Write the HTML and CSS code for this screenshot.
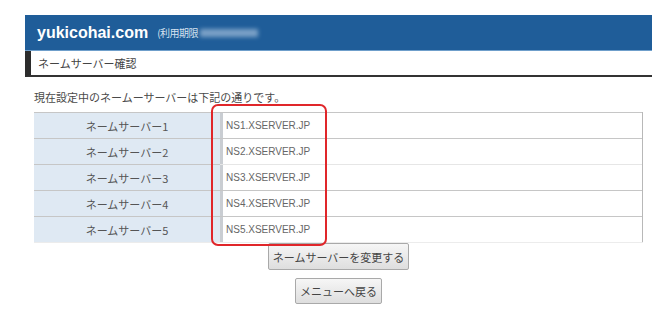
FILE: index.html
```html
<!DOCTYPE html>
<html lang="ja">
<head>
<meta charset="utf-8">
<link rel="stylesheet" href="styles.css">
</head>
<body>
<div class="page">
  <div class="header">
    <span class="site">yukicohai.com</span>
    <span class="limit">(利用期限</span>
    <span class="blur"></span>
  </div>
  <div class="title">ネームサーバー確認</div>
  <p class="lead">現在設定中のネームーサーバーは下記の通りです。</p>
  <div class="table-wrap">
    <table class="ns">
      <tr><th>ネームサーバー1</th><td>NS1.XSERVER.JP</td></tr>
      <tr><th>ネームサーバー2</th><td>NS2.XSERVER.JP</td></tr>
      <tr class="soft"><th>ネームサーバー3</th><td>NS3.XSERVER.JP</td></tr>
      <tr><th>ネームサーバー4</th><td>NS4.XSERVER.JP</td></tr>
      <tr class="last"><th>ネームサーバー5</th><td>NS5.XSERVER.JP</td></tr>
    </table>
    <div class="highlight"></div>
  </div>
  <div class="buttons">
    <button class="btn btn-wide">ネームサーバーを変更する</button>
    <button class="btn btn-small">メニューへ戻る</button>
  </div>
</div>
</body>
</html>
```

FILE: styles.css
```css
html, body {
  margin: 0;
  padding: 0;
  background: #fff;
}
body {
  font-family: "Noto Sans CJK JP", "Liberation Sans", sans-serif;
  color: #444;
}
.page {
  margin-left: 25px;
  width: 627px;
  padding-top: 15px;
}
.header {
  height: 35px;
  background: #1f5d99;
  border-bottom: 1px solid #6f9fcb;
  display: flex;
  align-items: center;
  padding-left: 12px;
  box-sizing: content-box;
}
.site {
  font-family: "Liberation Sans", Arial, sans-serif;
  font-weight: bold;
  font-size: 16px;
  color: #fff;
  letter-spacing: 0;
}
.limit {
  margin-left: 9px;
  font-size: 10px;
  color: #d6e3f0;
  letter-spacing: -0.5px;
}
.blur {
  display: inline-block;
  width: 58px;
  height: 8px;
  margin-left: 2px;
  background: #8cadcf;
  filter: blur(2px);
  opacity: 0.85;
}
.title {
  height: 24px;
  border-left: 6px solid #2c2c2c;
  border-bottom: 2px solid #333;
  padding-left: 7px;
  font-size: 11px;
  line-height: 24px;
  color: #444;
}
.lead {
  margin: 13px 0 0 9px;
  font-size: 11px;
  line-height: 14px;
  color: #4a4a4a;
}
.table-wrap {
  position: relative;
  margin-top: 8px;
  margin-left: 9px;
  width: 609px;
}
.ns {
  width: 609px;
  border-collapse: collapse;
  table-layout: fixed;
}
.ns th, .ns td {
  height: 25px;
  padding: 0;
  border-top: 1px solid #c6c6c6;
  font-weight: normal;
}
.ns th {
  width: 186px;
  background: #dfe9f3;
  font-size: 11px;
  color: #555;
  text-align: center;
}
.ns td {
  border-right: 1px solid #b8b8b8;
  font-family: "Liberation Sans", Arial, sans-serif;
  font-size: 10px;
  color: #666;
  padding-left: 6px;
  box-shadow: inset 3px 0 0 #c9cdd2;
}
.ns tr.soft td {
  border-top-color: #e6e6e6;
}
.ns tr.last th, .ns tr.last td {
  border-bottom: 1px solid #ececec;
}
.highlight {
  position: absolute;
  left: 177px;
  top: -8px;
  width: 112px;
  height: 138px;
  border: 2px solid #e0262a;
  border-radius: 7px;
}
.buttons {
  display: flex;
  flex-direction: column;
  align-items: center;
  gap: 8px;
  margin-top: 0;
}
.btn {
  font-family: "Noto Sans CJK JP", "Liberation Sans", sans-serif;
  font-size: 11px;
  color: #444;
  background: linear-gradient(#f6f6f6, #dedede);
  border: 1px solid #a9a9a9;
  border-radius: 2px;
  padding: 0;
  height: 27px;
}
.btn-wide {
  width: 141px;
}
.btn-small {
  width: 87px;
  height: 26px;
}
```
